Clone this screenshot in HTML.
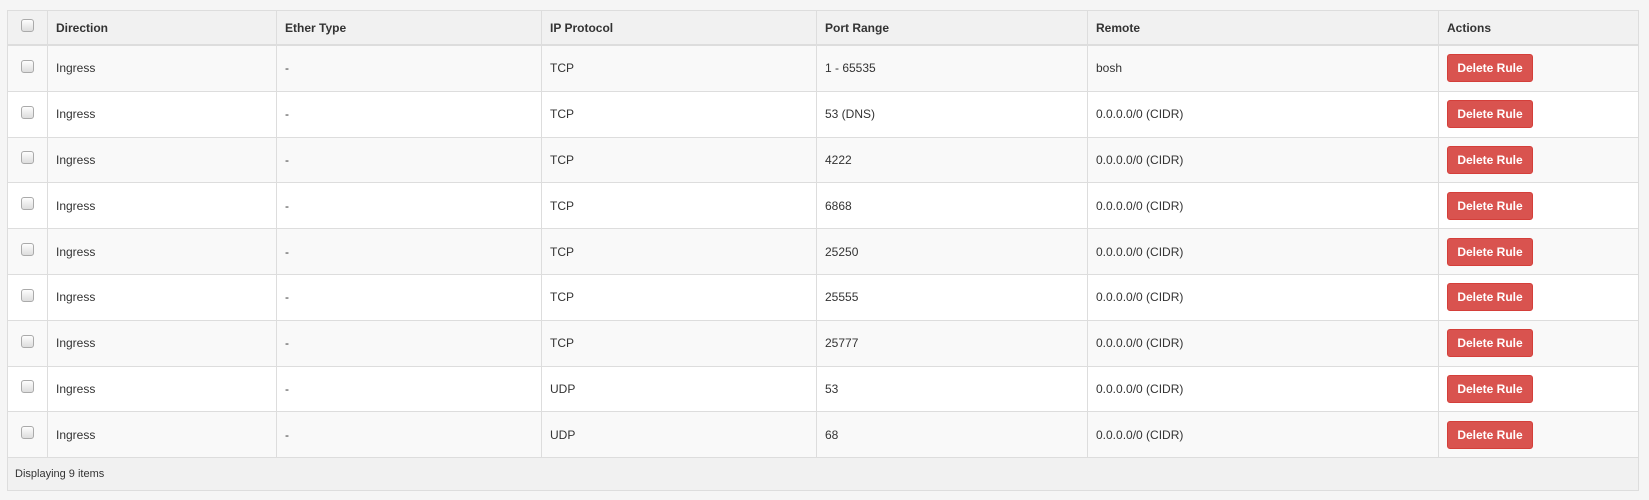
<!DOCTYPE html>
<html><head><style>
body{margin:0;background:#f5f5f5;font-family:"Liberation Sans",Arial,sans-serif;font-size:12px;color:#333;}
table{position:absolute;left:7px;top:10px;width:1631px;border-collapse:collapse;table-layout:fixed;}
td,th{border:1px solid #ddd;padding:0 8px;text-align:left;vertical-align:middle;}
th{height:33px;background:#f1f1f1;font-weight:bold;border-bottom:2px solid #ddd;}
tbody td{height:44.8px;background:#fff;}
tbody tr:nth-child(odd) td{background:#f9f9f9;}
td.c,th.c{text-align:center;padding:0;}
.cb{display:inline-block;width:11px;height:11px;border:1px solid #aaa;border-radius:3px;background:linear-gradient(#fdfdfd,#ddd);vertical-align:middle;margin-top:-6px}
.btn{display:inline-block;background:#d9534f;border:1px solid #d43f3a;color:#fff;font-weight:bold;border-radius:3px;width:84px;text-align:center;height:26px;line-height:26px;font-size:12px;}
tfoot td{height:32px;background:#f1f1f1;font-size:11px;padding-left:7px;}
</style></head><body>
<table>
<colgroup><col style="width:40px"><col style="width:229px"><col style="width:265px"><col style="width:275px"><col style="width:271px"><col style="width:351px"><col style="width:200px"></colgroup>
<thead><tr><th class="c"><span class="cb"></span></th><th>Direction</th><th>Ether Type</th><th>IP Protocol</th><th>Port Range</th><th>Remote</th><th>Actions</th></tr></thead>
<tbody>
<tr><td class="c"><span class="cb"></span></td><td>Ingress</td><td>-</td><td>TCP</td><td>1 - 65535</td><td>bosh</td><td><span class="btn">Delete Rule</span></td></tr>
<tr><td class="c"><span class="cb"></span></td><td>Ingress</td><td>-</td><td>TCP</td><td>53 (DNS)</td><td>0.0.0.0/0 (CIDR)</td><td><span class="btn">Delete Rule</span></td></tr>
<tr><td class="c"><span class="cb"></span></td><td>Ingress</td><td>-</td><td>TCP</td><td>4222</td><td>0.0.0.0/0 (CIDR)</td><td><span class="btn">Delete Rule</span></td></tr>
<tr><td class="c"><span class="cb"></span></td><td>Ingress</td><td>-</td><td>TCP</td><td>6868</td><td>0.0.0.0/0 (CIDR)</td><td><span class="btn">Delete Rule</span></td></tr>
<tr><td class="c"><span class="cb"></span></td><td>Ingress</td><td>-</td><td>TCP</td><td>25250</td><td>0.0.0.0/0 (CIDR)</td><td><span class="btn">Delete Rule</span></td></tr>
<tr><td class="c"><span class="cb"></span></td><td>Ingress</td><td>-</td><td>TCP</td><td>25555</td><td>0.0.0.0/0 (CIDR)</td><td><span class="btn">Delete Rule</span></td></tr>
<tr><td class="c"><span class="cb"></span></td><td>Ingress</td><td>-</td><td>TCP</td><td>25777</td><td>0.0.0.0/0 (CIDR)</td><td><span class="btn">Delete Rule</span></td></tr>
<tr><td class="c"><span class="cb"></span></td><td>Ingress</td><td>-</td><td>UDP</td><td>53</td><td>0.0.0.0/0 (CIDR)</td><td><span class="btn">Delete Rule</span></td></tr>
<tr><td class="c"><span class="cb"></span></td><td>Ingress</td><td>-</td><td>UDP</td><td>68</td><td>0.0.0.0/0 (CIDR)</td><td><span class="btn">Delete Rule</span></td></tr>
</tbody>
<tfoot><tr><td colspan="7">Displaying 9 items</td></tr></tfoot>
</table>
</body></html>
